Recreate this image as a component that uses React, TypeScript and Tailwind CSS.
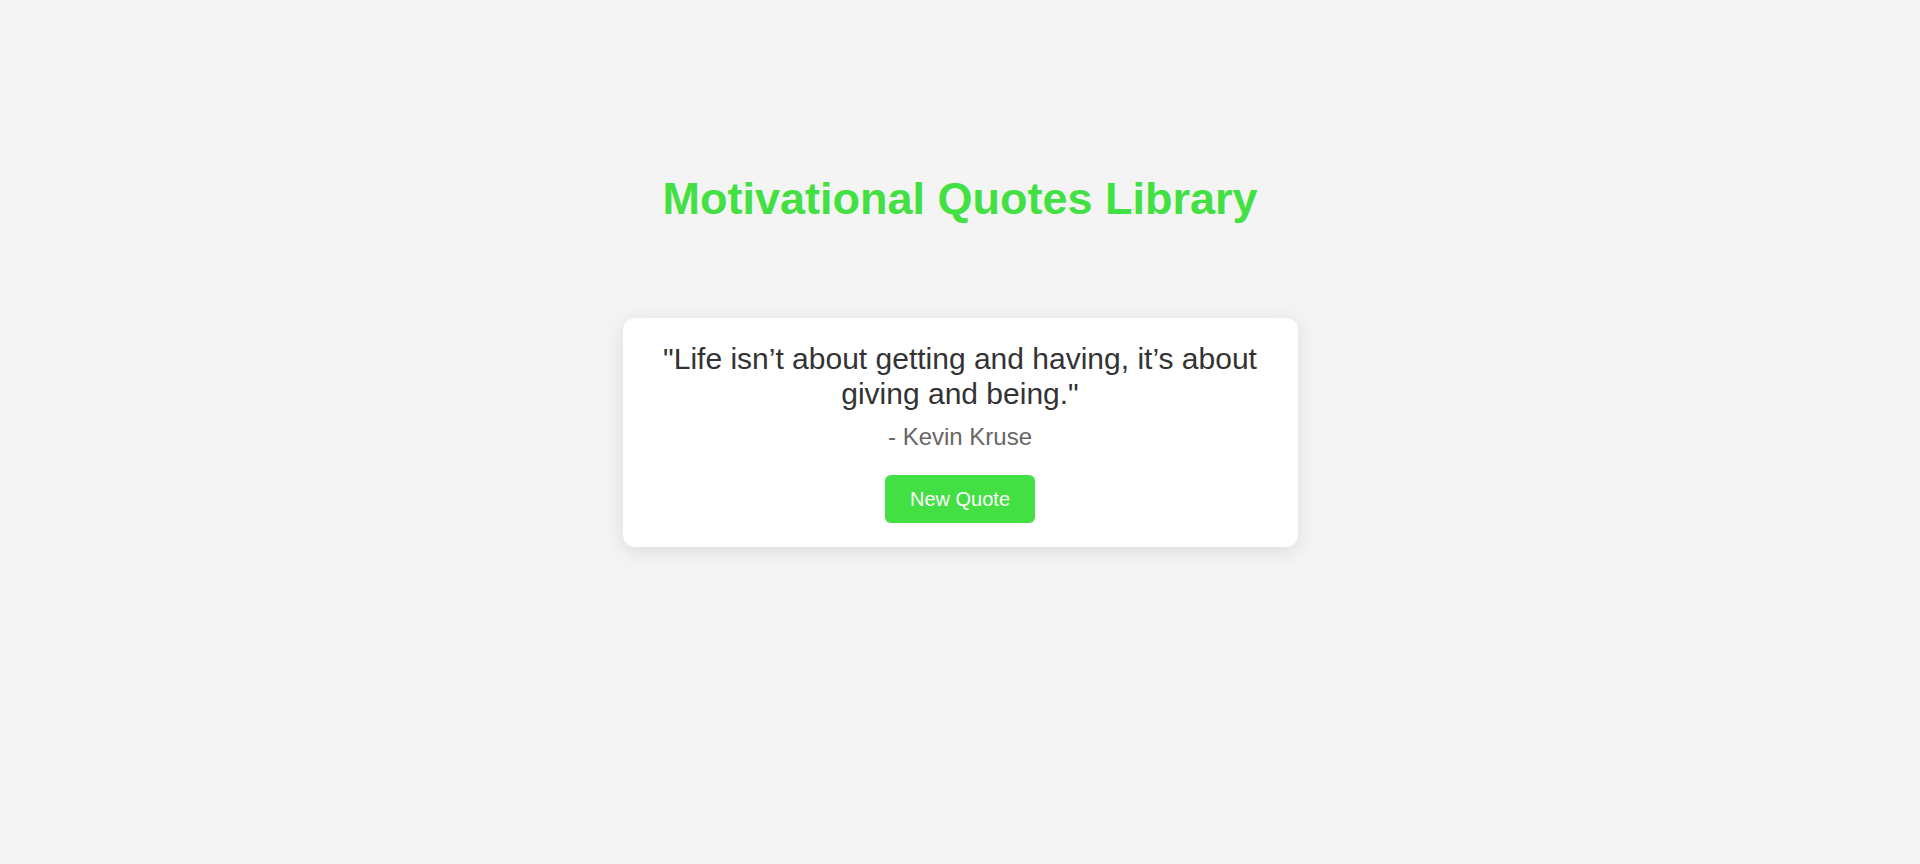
const quote = {
  text: "Life isn’t about getting and having, it’s about giving and being.",
  author: "Kevin Kruse",
};

function QuoteCard() {
  return (
    <div className="mt-[93px] w-[675px] rounded-xl bg-white p-6 text-center shadow-[0_4px_20px_rgba(0,0,0,0.1)]">
      <p className="text-[30px] leading-[1.15] text-[#333333]">
        "{quote.text}"
      </p>
      <p className="mt-3 text-[24px] leading-[normal] text-[#666666]">
        - {quote.author}
      </p>
      <button
        type="button"
        className="mt-6 h-12 cursor-pointer rounded-md bg-[#42e042] px-[25px] text-[20px] leading-[normal] text-white"
      >
        New Quote
      </button>
    </div>
  );
}

export default function App() {
  return (
    <div className="flex min-h-screen flex-col items-center bg-[#f4f4f4] pt-[173px] font-['Liberation_Sans',Arial,sans-serif]">
      <h1 className="text-[45px] font-bold leading-[normal] text-[#42e042]">
        Motivational Quotes Library
      </h1>
      <QuoteCard />
    </div>
  );
}
